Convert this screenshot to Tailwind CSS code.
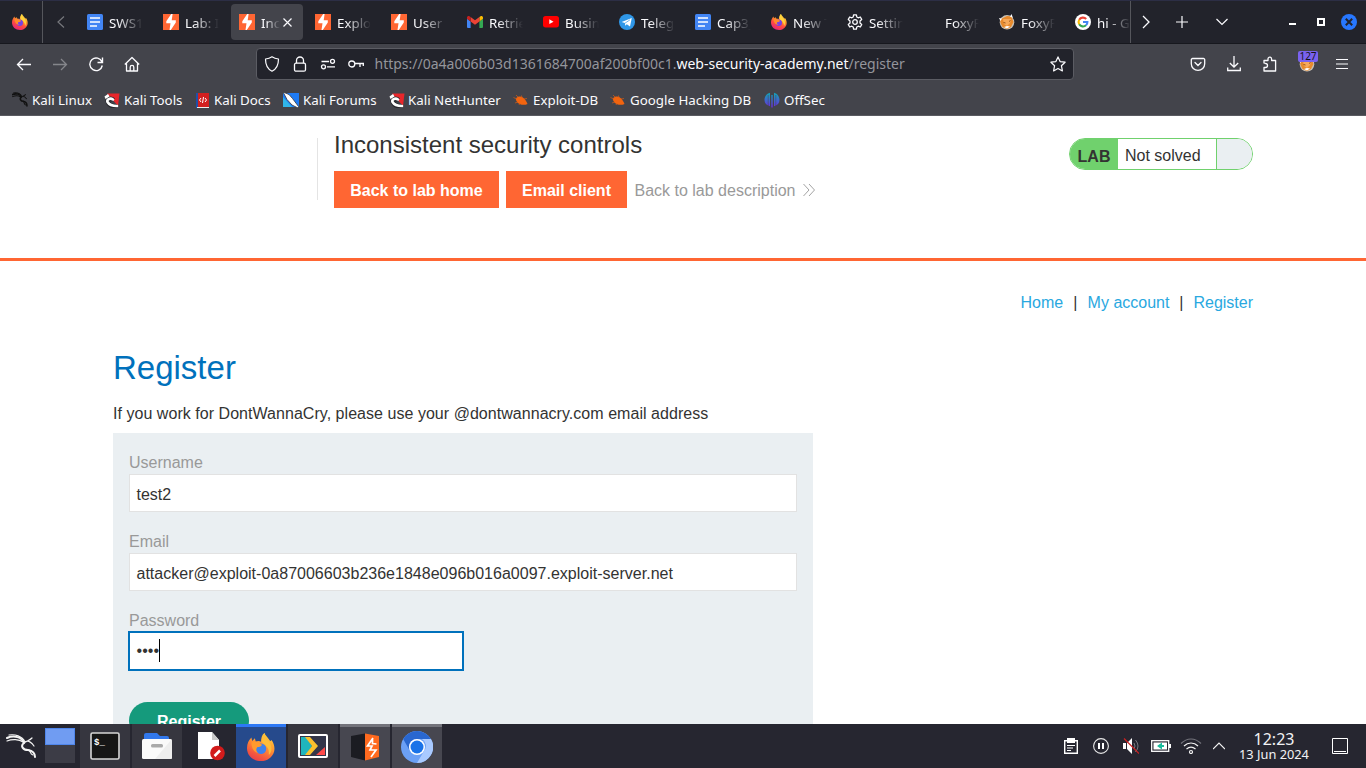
<!DOCTYPE html>
<html lang="en">
<head>
<meta charset="utf-8">
<title>Inconsistent security controls</title>
<script src="https://cdn.jsdelivr.net/npm/@tailwindcss/browser@4"></script>
</head>
<body class="w-[1366px] h-[768px] overflow-hidden bg-white">
<svg class="absolute w-0 h-0">
  <defs>
    <linearGradient id="fxg" x1="0.8" y1="0" x2="0.3" y2="1"><stop offset="0" stop-color="#fff44f"/><stop offset=".35" stop-color="#ff9a2b"/><stop offset=".65" stop-color="#ff4b3f"/><stop offset="1" stop-color="#e5227d"/></linearGradient>
    <linearGradient id="fxo" x1="0.8" y1="0" x2="0.3" y2="1"><stop offset="0" stop-color="#ffd83b"/><stop offset=".45" stop-color="#ff9332"/><stop offset=".8" stop-color="#f4573f"/><stop offset="1" stop-color="#e8404a"/></linearGradient>
    <linearGradient id="ofs" x1="0" y1="0" x2="0" y2="1"><stop offset="0" stop-color="#12a5b5"/><stop offset="1" stop-color="#6a2be0"/></linearGradient>
    <symbol id="firefox" viewBox="0 0 32 32">
      <path fill="url(#fxg)" d="M20 0c1 3 3 4 5 7 1 1 1 2 2 2l1-1c3 4 4 9 3 13-2 7-8 11-15 11C7 32 0 26 0 17 0 12 2 8 5 5l1 4 3-3 1 4c2-1 4-1 6 0 0-4 1-8 4-10z"/>
      <circle cx="15.500" cy="17.500" r="6.500" fill="#7542e5"/>
      <path fill="#ff8a2b" d="M5 10c3-3 7-1 8 1l5 2c0 2-3 3-5 3-2 2-1 5 2 5-5 2-10-4-10-11z"/>
      <path fill="#ffd43c" d="M20 0c0 7 8 9 8 18 0 2-1 4-2 6 0-4-1-7-4-10-2-3-5-2-5-6 0-3 1-6 3-8z"/>
    </symbol>
    <symbol id="fxbig" viewBox="0 0 32 32">
      <path fill="url(#fxo)" d="M20 0c1 3 3 4 5 7 1 1 1 2 2 2l1-1c3 4 4 9 3 13-2 7-8 11-15 11C7 32 0 26 0 17 0 12 2 8 5 5l1 4 3-3 1 4c2-1 4-1 6 0 0-4 1-8 4-10z"/>
      <circle cx="16" cy="18" r="6" fill="#3f82ea"/>
      <path fill="#ff9a2e" d="M5 11c3-2 7-1 8 0l4 2c0 2-3 3-5 3-2 2-2 5 1 7-5-1-8-6-8-12z"/>
      <path fill="#fdbd3a" d="M20 0c0 7 8 9 8 18 0 3-1 5-3 7 0-5 0-7-3-10-2-3-5-3-5-7 0-2 1-6 3-8z"/>
    </symbol>
    <symbol id="docs" viewBox="0 0 16 16"><rect width="16" height="16" rx="1.500" fill="#4285f4"/><path stroke="#fff" stroke-width="1.700" d="M3 4h10M3 8h10M3 12h7"/></symbol>
    <symbol id="burp" viewBox="0 0 16 16"><rect width="16" height="16" fill="#ff6633"/><path fill="#fff" d="M8.200 0 3.300 7.200v2h4.200L6.500 16h1.300l5-7.500V6.300H8.700L9.600 0z"/></symbol>
    <symbol id="gmail" viewBox="0 0 16 12"><path fill="#4285f4" d="M1 12h2.600V5.500L0 2.800V11q0 1 1 1z"/><path fill="#34a853" d="M12.400 12H15q1 0 1-1V2.800l-3.600 2.700z"/><path fill="#fbbc04" d="M12.400 1v4.500L16 2.800V1.600C16 .2 14.400-.4 13.300.4z"/><path fill="#ea4335" d="M3.600 5.500V1L8 4.300 12.400 1v4.500L8 8.800z"/><path fill="#c5221f" d="M0 1.600v1.200l3.600 2.700V1L2.700.4C1.600-.4 0 .2 0 1.600z"/></symbol>
    <symbol id="yt" viewBox="0 0 16 12"><rect width="16" height="11.400" rx="2.600" fill="#f00"/><path fill="#fff" d="M6.300 3.300v4.800l4.200-2.400z"/></symbol>
    <symbol id="tg" viewBox="0 0 16 16"><circle cx="8" cy="8" r="8" fill="#2f97e8"/><path fill="#fff" d="M2.600 8 12.800 4 11 12.500 7.800 10.300l-1.600 1.500-.3-2.700z"/><path stroke="#2f97e8" stroke-width=".7" d="M6 9.200 11 5.800"/></symbol>
    <symbol id="gear" viewBox="0 0 16 16"><g fill="none" stroke="#fbfbfe" stroke-width="1.300" stroke-linejoin="round"><path d="M6.600.8h2.800l.4 2.200 1.400.8 2.100-.8 1.400 2.400L13 6.900v2.200l1.700 1.500-1.400 2.400-2.100-.8-1.400.8-.4 2.200H6.600l-.4-2.200-1.400-.8-2.100.8-1.400-2.400L3 9.100V6.900L1.300 5.400 2.700 3l2.100.8L6.200 3z"/><circle cx="8" cy="8" r="2.300"/></g></symbol>
    <symbol id="foxy" viewBox="0 0 16 16"><circle cx="8" cy="8.300" r="7.300" fill="#c9c0b4"/><path fill="#e88a2c" d="M1 5.500 4 4l4-2 4.500.5L14.500 8l-2.500 5-4 2-4.500-2L1.500 9z"/><path fill="#f7a95a" d="M4 5h8l-1 4-3 3-3-2z"/><path fill="#fff" d="M0 4l3 .5L1.500 7zM12.500 0l1.500 4L11 2.500zM5 13l3-1 3 .5-3 2z"/><path stroke="#8a4a12" stroke-width=".9" d="M4.500 8.500l2 .5M10 7.500l1.500-1"/></symbol>
    <symbol id="google" viewBox="0 0 16 16"><circle cx="8" cy="8" r="8" fill="#fff"/><g fill="none" stroke-width="2.100"><path stroke="#ea4335" d="M4.200 5.800A4.400 4.400 0 0 1 11.200 5"/><path stroke="#fbbc05" d="M4.200 5.800a4.400 4.400 0 0 0 0 4.400"/><path stroke="#34a853" d="M4.200 10.200a4.400 4.400 0 0 0 6.800 1.100"/><path stroke="#4285f4" d="M8 8h4.400a4.400 4.400 0 0 1-1.400 3.300"/></g></symbol>
    <symbol id="dragon" viewBox="0 0 31 31"><g fill="none" stroke="currentColor" stroke-linecap="round"><path stroke-width="3" d="M1 5c7-3 15-1 17 5-4 3-1 8 4 8 5 1 7 4 7 9"/><path stroke-width="2" d="M1 9c5-2 12-2 16 1M3 2c6-1 13 1 16 7 3-2 6 0 9 4M18 10c3-2 6-3 8-5M22 18c2 2 1 5 4 7"/></g></symbol>
    <symbol id="tools" viewBox="0 0 16 16"><path fill="#e8262b" d="M3 1.500h12.500L14 14z"/><path fill="none" stroke="#26272c" stroke-width="4.600" d="M13 14.500C9 14.500 5 13 4 10 3 7.500 6.500 5.500 9.500 8"/><path fill="none" stroke="#fff" stroke-width="2.600" stroke-linecap="round" d="M13 14C9 14 5 12.500 3.500 10 2.500 7.500 6 5.500 9 7.500"/><path fill="#fff" d="M.5 4.500 4 2l1.500 2.500L1.500 7z"/></symbol>
    <symbol id="forums" viewBox="0 0 16 16"><path fill="#1e7bf5" d="M0 1h16v14H0z"/><path fill="#30b6ea" d="M0 5v10h9z"/><path stroke="#35363c" stroke-width=".8" fill="#fff" d="M0 0l6 2.500 3.500 4 6 8-.5 1.500-6-3-5-5.500z"/></symbol>
    <symbol id="bug" viewBox="0 0 16 16"><path fill="#f2640f" d="M3 6.500C5 4 8 4 10.500 6c2 1.500 3 3.500 4 6-3 1.500-8 1-10-1.500C3.500 9 2.500 8 3 6.500z"/><path stroke="#d85c14" stroke-width=".7" fill="none" d="M4 7 .5 5.500M5 5 3 3M9 6 8.500 3.500M11 7l3-.5M5 10l-3 1m5 0-1 2"/></symbol>
    <symbol id="shield" viewBox="0 0 16 16"><path fill="none" stroke="#fbfbfe" stroke-width="1.200" stroke-linejoin="round" d="M8 .8C6 2.200 3.800 2.800 1.500 3c0 5.600 1 9.600 6.500 12.200C13.500 12.600 14.500 8.600 14.500 3 12.200 2.800 10 2.200 8 .8z"/></symbol>
  </defs>
</svg>
<div class="flex flex-col w-full h-full">

  <!-- Tab strip -->
  <header class="h-[44px] shrink-0 flex bg-[#22232b] border-t border-[#2c2e45] border-b border-b-[#17181e] font-['Noto_Sans',sans-serif] text-[13.330px] text-[#fbfbfe]">
    <div class="w-[43px] border-r border-[#55565c] flex items-center justify-center"><svg class="w-4 h-4 ml-[-2px]"><use href="#firefox"/></svg></div>
    <div class="w-[36px] flex items-center justify-center"><svg class="w-2 h-3" viewBox="0 0 8 12" fill="none" stroke="#77787d" stroke-width="1.200"><path d="M7 .5 1 6l6 5.500"/></svg></div>
    <div id="tabs" class="w-[1052px] overflow-hidden flex items-center border-r border-[#55565c]"></div>
    <div class="flex-1 flex items-center">
      <svg class="w-[10px] h-[14px] ml-[10px]" viewBox="0 0 10 14" fill="none" stroke="#fbfbfe" stroke-width="1.300"><path d="M2 1l6 6-6 6"/></svg>
      <svg class="w-3 h-3 ml-[25px]" viewBox="0 0 12 12" stroke="#fbfbfe" stroke-width="1.200"><path d="M6 0v12M0 6h12"/></svg>
      <svg class="w-3 h-2 ml-[28px]" viewBox="0 0 12 8" fill="none" stroke="#fbfbfe" stroke-width="1.200"><path d="M.5 1 6 6.500 11.500 1"/></svg>
      <div class="w-[7px] h-[2px] bg-white ml-[61px] mt-[4px]"></div>
      <div class="w-2 h-2 border-2 border-white ml-[21px]"></div>
      <svg class="w-4 h-4 ml-[16px]" viewBox="0 0 16 16"><circle cx="8" cy="8" r="8" fill="#2777ff"/><path stroke="#22232b" stroke-width="2" d="M4.800 4.800l6.400 6.400M11.200 4.800l-6.400 6.400"/></svg>
    </div>
  </header>

  <!-- Navigation bar -->
  <div class="h-[40px] shrink-0 bg-[#43444b] flex items-center font-['Noto_Sans',sans-serif]">
    <div class="w-[256px] pl-4 flex gap-[20px] items-center">
      <svg class="w-4 h-4" viewBox="0 0 16 16" fill="none" stroke="#fbfbfe" stroke-width="1.300"><path d="M15 8.500H1.500M7 3 1.500 8.500 7 14"/></svg>
      <svg class="w-4 h-4" viewBox="0 0 16 16" fill="none" stroke="#85868b" stroke-width="1.300"><path d="M1 8.500h13.500M9 3 14.500 8.500 9 14"/></svg>
      <svg class="w-4 h-4" viewBox="0 0 16 16" fill="none" stroke="#fbfbfe" stroke-width="1.400"><path d="M14.500 1.500v5h-5M14 6A6.300 6.300 0 1 0 14.300 9.500"/></svg>
      <svg class="w-4 h-4" viewBox="0 0 16 16" fill="none" stroke="#fbfbfe" stroke-width="1.300" stroke-linejoin="round"><path d="M.8 8.500 8 1.500l7.200 7M2.500 7.500V15h11V7.500M6.200 15v-3.800a1.800 1.800 0 0 1 3.600 0V15"/></svg>
    </div>
    <div class="w-[818px] h-8 bg-[#22232b] border border-[#5b5c63] rounded-[4px] flex items-center pl-[7px] pr-[7px]">
      <svg class="w-4 h-4"><use href="#shield"/></svg>
      <svg class="w-4 h-4 ml-[12px]" viewBox="0 0 16 16" fill="none" stroke="#fbfbfe" stroke-width="1.300"><rect x="2.500" y="7.200" width="11" height="8" rx="1.500"/><path d="M4.500 7.200V4.500a3.500 3.500 0 0 1 7 0v2.700"/></svg>
      <svg class="w-4 h-4 ml-[12px]" viewBox="0 0 16 16" fill="none" stroke="#fbfbfe" stroke-width="1.300"><path d="M1.500 5.500H9M7 10.800h8"/><circle cx="12.500" cy="5.300" r="2"/><circle cx="3.500" cy="10.800" r="2"/></svg>
      <svg class="w-4 h-4 ml-[12px]" viewBox="0 0 16 16" fill="none" stroke="#fbfbfe" stroke-width="1.300"><circle cx="3.800" cy="8" r="3"/><path d="M6.800 7.500H16M12 7.500V11M15.300 7.500V10"/></svg>
      <div class="ml-[10.500px] text-[14px] text-[#94959b] whitespace-nowrap flex-1 -mt-px">https://0a4a006b03d1361684700af200bf00c1.<span class="text-[#fbfbfe]">web-security-academy.net</span>/register</div>
      <svg class="w-4 h-4" viewBox="0 0 16 16" fill="none" stroke="#fbfbfe" stroke-width="1.200" stroke-linejoin="round"><path d="M8 .9l2.100 4.700 5 .6-3.700 3.500 1 5.200L8 12.400l-4.400 2.500 1-5.200L.9 6.200l5-.6z"/></svg>
    </div>
    <div class="flex-1 flex items-center justify-end pr-4">
      <svg class="w-4 h-4 mr-[20px]" viewBox="0 0 16 16" fill="none" stroke="#fbfbfe" stroke-width="1.300" stroke-linecap="round"><path d="M2.500 2.500h11a1.200 1.200 0 0 1 1.200 1.200v4a6.700 6.700 0 0 1-13.400 0v-4a1.200 1.200 0 0 1 1.200-1.200zM5 6.500l3 3 3-3"/></svg>
      <svg class="w-4 h-4 mr-[20px]" viewBox="0 0 16 16" fill="none" stroke="#fbfbfe" stroke-width="1.300"><path d="M8 0v11M3.800 7 8 11l4.200-4M1.700 11.500v3h12.600v-3"/></svg>
      <svg class="w-4 h-4 mr-[21px]" viewBox="0 0 16 16" fill="none" stroke="#fbfbfe" stroke-width="1.300" stroke-linejoin="round"><path d="M2 7V4.500h4V3a1.800 1.800 0 0 1 3.600 0v1.500h4V15H2v-3.500h1.500a2 2 0 0 0 0-4z"/></svg>
      <div class="w-4 h-4 relative mr-[19px]"><svg class="w-4 h-4"><use href="#foxy"/></svg><div class="absolute left-[-1px] top-[-5px] w-[20px] h-[11px] rounded-[2px] bg-[#7a62f0] text-[#15141a] text-[10px] leading-[11px] text-center">127</div></div>
      <svg class="w-4 h-4" viewBox="0 0 16 16" stroke="#fbfbfe" stroke-width="1.200"><path d="M2 3.500h12M2 8h12M2 12.500h12"/></svg>
    </div>
  </div>

  <!-- Bookmarks -->
  <div class="h-[32px] shrink-0 bg-[#43444b] border-b border-[#5a5b61] flex items-center pl-3 pt-[2px] font-['Noto_Sans',sans-serif] text-[13.330px] text-[#fbfbfe] whitespace-nowrap">
    <div class="w-[92px] flex items-center gap-1"><svg class="w-4 h-4 text-[#111]"><use href="#dragon"/></svg>Kali Linux</div>
    <div class="w-[92px] flex items-center gap-1"><svg class="w-4 h-4"><use href="#tools"/></svg>Kali Tools</div>
    <div class="w-[87px] flex items-center gap-[5px]"><svg class="w-[13px] h-[15px]" viewBox="0 0 13 15"><path fill="#d31f1f" d="M0 0h13v15H0z"/><path fill="#1f4fa8" d="M0 0h2v15H0z"/><path fill="#eee" d="M1 14h12v1H1z"/><path fill="none" stroke="#fff" d="M5 5 3.500 7 5 9m4-4 1.500 2L9 9M7.500 4l-1 6"/></svg>Kali Docs</div>
    <div class="w-[106px] flex items-center gap-1"><svg class="w-4 h-4"><use href="#forums"/></svg>Kali Forums</div>
    <div class="w-[124px] flex items-center gap-[3px]"><svg class="w-4 h-4"><use href="#tools"/></svg>Kali NetHunter</div>
    <div class="w-[97px] flex items-center gap-1"><svg class="w-4 h-4"><use href="#bug"/></svg>Exploit-DB</div>
    <div class="w-[154px] flex items-center gap-1"><svg class="w-4 h-4"><use href="#bug"/></svg>Google Hacking DB</div>
    <div class="flex items-center gap-1"><svg class="w-4 h-4" viewBox="0 0 16 16"><path fill="url(#ofs)" d="M6 .8v13.400C2.500 13.500.5 11 .5 8S2.500 1.500 6 .8zM10 .8v13.400c3.500-.7 5.500-3.200 5.500-6.200S13.500 1.500 10 .8zM7.300 3h1.400v12.500H7.300z"/><path stroke="#43444b" stroke-width=".5" d="M4.200 3v11M11.800 3v11"/></svg>OffSec</div>
  </div>

  <!-- Page -->
  <main class="h-[608px] shrink-0 overflow-hidden bg-white font-['Liberation_Sans',sans-serif] text-[16px] leading-5 text-[#333332]">
    <section class="h-[145px] border-b-[3px] border-[#ff6633] pt-[22px] px-[113px] flex">
      <div class="w-[205px] h-[62px] border-r border-[#e4e4e4] shrink-0"></div>
      <div class="pl-4 flex-1">
        <h2 class="text-[24px] leading-7 mt-[-7px]">Inconsistent security controls</h2>
        <div class="flex items-center mt-[12px] h-[37px]">
          <a class="w-[165px] h-[37px] bg-[#ff6633] text-white font-bold flex items-center justify-center pt-[2px]">Back to lab home</a>
          <a class="w-[121px] h-[37px] bg-[#ff6633] text-white font-bold flex items-center justify-center pt-[2px] ml-[7px]">Email client</a>
          <a class="text-[#999] ml-[7.500px] pt-[2px]">Back to lab description</a>
          <svg class="w-3 h-[14px] ml-2" viewBox="0 0 12 14" fill="none" stroke="#999" stroke-width=".9"><path d="M.5 1 6 7 .5 13M6 1l5.500 6L6 13"/></svg>
        </div>
      </div>
      <div class="w-[184px] h-8 rounded-full border border-[#70d16d] bg-white overflow-hidden flex">
        <div class="w-[48px] bg-[#70d16d] font-bold flex items-center justify-center pt-[5px]">LAB</div>
        <div class="flex-1 flex items-center pl-[7px] pt-[3px]">Not solved</div>
        <div class="w-[36px] border-l border-[#70d16d] bg-[#eaeff2]"></div>
      </div>
    </section>
    <section class="px-[113px]">
      <nav class="flex justify-end pt-[32px] text-[#29a8df]"><a>Home</a><span class="w-[24.500px] text-center text-[#333332]">|</span><a>My account</a><span class="w-[24px] text-center text-[#333332]">|</span><a>Register</a></nav>
      <h1 class="text-[33px] leading-10 text-[#0071bc] mt-[35px]">Register</h1>
      <p class="mt-[16px] tracking-[0.040px]">If you work for DontWannaCry, please use your @dontwannacry.com email address</p>
      <div class="mt-[9px] w-[700px] h-[340px] bg-[#eaeff2] px-4 pt-[20px]">
        <label class="block text-[#999]">Username</label>
        <div class="h-[38px] mt-[1px] bg-white border border-[#e2e2e2] pl-[6.500px] pt-[4px] flex items-center">test2</div>
        <label class="block text-[#999] mt-[20px]">Email</label>
        <div class="h-[38px] mt-[1px] bg-white border border-[#e2e2e2] pl-[6.500px] pt-[4px] flex items-center tracking-[0.010px]">attacker@exploit-0a87006603b236e1848e096b016a0097.exploit-server.net</div>
        <label class="block text-[#999] mt-[20px]">Password</label>
        <div class="h-[40px] w-[336px] -ml-px bg-white border-2 border-[#0071bc] pl-[6.600px] flex items-center"><span>••••</span><span class="w-px h-[23px] bg-black -mt-px"></span></div>
        <div class="mt-[31px] w-[120px] h-[37px] rounded-full bg-[#159a7c] text-white font-bold text-center pt-[10px]">Register</div>
      </div>
    </section>
  </main>

  <!-- Desktop panel -->
  <footer class="h-[44px] shrink-0 bg-[#262630] flex font-['Noto_Sans',sans-serif] text-[#f2f2f4]">
    <div class="w-[45px] flex items-center pl-[6px]"><svg class="w-[31px] h-[26px]" viewBox="0 0 31 26" fill="none" stroke="#f4f4f4" stroke-linecap="round"><path stroke-width="2" d="M1 5c7-3 15-1 17 5-4 3-1 7 4 7 5 1 7 4 7 7"/><path stroke-width="1.200" d="M1 8c5-2 12-2 16 1M3 2c6-1 13 1 16 7 3-2 6 0 9 4M18 10c3-2 6-3 8-5M23 17c2 2 1 4 4 5"/></svg></div>
    <div class="w-[35px] pt-[4px]"><div class="w-[30px] h-[17px] bg-[#709cf2] border border-[#4f86ec]"></div><div class="w-[30px] h-[18px] bg-[#3c3c46]"></div></div>
    <div class="flex gap-[2px]">
      <div class="w-[50px] bg-[#36363f] flex items-center justify-center"><svg class="w-[30px] h-[28px]" viewBox="0 0 30 28"><rect x="1" y="1" width="28" height="26" rx="1.500" fill="#161616" stroke="#d6d6d6" stroke-width="1.600"/><text x="4" y="13" font-family="Liberation Mono" font-weight="bold" font-size="9" fill="#fff">$_</text></svg></div>
      <div class="w-[50px] bg-[#36363f] flex items-center justify-center"><svg class="w-[30px] h-[28px]" viewBox="0 0 30 28"><path fill="#3278ec" d="M2 3q0-2 2-2h11l3 3h7q2 0 2 2v6H2z"/><rect y="7" width="30" height="20" rx="1.500" fill="#fafafa"/><path fill="#e6e6e6" d="M30 7v20H13z" opacity=".6"/><rect x="9" y="12" width="12" height="3.500" rx="1.500" fill="#a9a9a9"/></svg></div>
      <div class="w-[50px] flex items-center justify-center pl-[4px]"><svg class="w-[28px] h-[30px]" viewBox="0 0 28 30"><path fill="#fff" d="M1 1h14l7 8v19H1z"/><path fill="#c9c9c9" d="M15 1l7 8h-7z"/><circle cx="20.500" cy="22" r="7.300" fill="#d21b1b"/><path stroke="#fff" stroke-width="2.500" d="M17.500 25l5.500-5.500"/></svg></div>
      <div class="w-[50px] bg-[#264a8c] border-t-[3px] border-[#2d78f4] flex items-center justify-center"><svg class="w-7 h-7 mt-[-2px]"><use href="#fxbig"/></svg></div>
      <div class="w-[50px] bg-[#36363f] flex items-center justify-center"><svg class="w-[30px] h-[24px]" viewBox="0 0 30 24"><rect x="1" y="1" width="28" height="22" fill="#33364a" stroke="#fff" stroke-width="2" rx="1"/><path fill="#1fb5bd" d="M3 3h5l6 9-6 9H3z"/><path fill="#fbc02d" d="M7 3h5l8 9-8 9H7l7-9z"/><path fill="#ff4a4a" d="M27 13v8H18z"/></svg></div>
      <div class="w-[50px] bg-[#474750] border-t-[3px] border-[#73737b] flex items-center justify-center"><svg class="w-7 h-7 mt-[-2px]" viewBox="0 0 28 28"><path fill="#1b1c22" d="M0 3l14-2.500v27L0 24z"/><path fill="#ff6a1f" d="M14 .5 28 3v21l-14 3.500z"/><path fill="none" stroke="#fff" stroke-width="1.700" d="M22 5l-5.500 8h4.500l-2 4h6l-5 7M21.500 5.500v5l4 .5"/></svg></div>
      <div class="w-[50px] bg-[#474750] border-t-[3px] border-[#73737b] flex items-center justify-center"><svg class="w-8 h-8 mt-[-2px]" viewBox="0 0 32 32"><circle cx="16" cy="16" r="16" fill="#6ba0f5"/><path fill="#2967cf" d="M2.200 8A16 16 0 0 1 29.800 8H16a8 8 0 0 0-7 12z"/><path fill="#a9caff" d="M30 8a16 16 0 0 1-14 24l7-12a8 8 0 0 0-2-12z"/><circle cx="16" cy="16" r="8" fill="#fff"/><circle cx="16" cy="16" r="6.500" fill="#1a73e8"/></svg></div>
    </div>
    <div class="flex-1 flex items-center justify-end">
      <svg class="w-[14px] h-4 mr-[15px]" viewBox="0 0 14 16"><path fill="none" stroke="#fff" stroke-width="1.400" d="M.7 2.700h12.600v12.600H.7z"/><path fill="#fff" d="M3 0h8v5H3z"/><path stroke="#fff" d="M3 7.500h8M3 10h6M3 12.500h4"/></svg>
      <svg class="w-4 h-4 mr-[14px]" viewBox="0 0 16 16"><circle cx="8" cy="8" r="7.400" fill="none" stroke="#e8e8e8" stroke-width="1.100"/><path stroke="#fff" stroke-width="2" d="M6 5v6M10 5v6"/></svg>
      <svg class="w-4 h-4 mr-[12px]" viewBox="0 0 16 16"><path fill="#fff" d="M0 5h3v6H0zM4 5l5-5v16l-5-5z"/><path fill="none" stroke="#77777e" d="M11 5q2 3 0 6M12.500 2q5 6 0 12"/><path stroke="#c22" stroke-width="1.200" d="M1 .5 16 15.500"/></svg>
      <svg class="w-5 h-3 mr-[9px]" viewBox="0 0 20 12"><rect x=".7" y=".7" width="17" height="10.600" fill="none" stroke="#fff" stroke-width="1.300"/><path fill="#fff" d="M18 4h2v4h-2zM2.500 2.500h13.500v7H2.500z"/><path fill="#1abc9c" d="M6 6l5-3.500v2.500h2v2h-2v2.500z"/></svg>
      <svg class="w-[22px] h-4 mr-[11px]" viewBox="0 0 22 16" fill="none" stroke="#f4f4f4" stroke-width="1.200"><path stroke="#74747c" d="M1 5.500C7-.5 15-.5 21 5.500"/><path d="M4 8c4-4 10-4 14 0M6.500 11c3-2.500 6-2.500 9 0"/><circle cx="11" cy="14" r="1.500"/></svg>
      <svg class="w-3 h-2 mr-[13px]" viewBox="0 0 12 8" fill="none" stroke="#f4f4f4" stroke-width="1.200"><path d="M0 7l6-6 6 6"/></svg>
      <div class="w-[72px] text-center whitespace-nowrap"><div class="text-[16px] leading-[16px] pb-px">12:23</div><div class="text-[12.800px] leading-[13px]">13 Jun 2024</div></div>
      <svg class="w-4 h-4 ml-[22px] mr-[18px]" viewBox="0 0 16 16" fill="none" stroke="#fff"><path d="M.5.500h15v15H.5zM2 13.500h12"/></svg>
    </div>
  </footer>
</div>
<script>
const tabs=[['docs','SWS1'],['burp','Lab: I'],['burp','Inc',1],['burp','Explo'],['burp','User'],['gmail','Retrie'],['yt','Busin'],['tg','Teleg'],['docs','Cap3_'],['firefox','New T'],['gear','Settin'],['','FoxyP'],['foxy','FoxyP'],['google','hi - G']];
document.getElementById('tabs').innerHTML=tabs.map(([i,t,a])=>`<div class="w-[76px] shrink-0 flex items-center"><div class="w-[72px] h-[36px] rounded-[4px] pl-2 flex items-center ${a?'bg-[#43444b]':''}"><svg class="w-4 h-4 shrink-0">${i?`<use href="#${i}"/>`:''}</svg><span class="${a?'w-[19px]':'w-[34px]'} ml-[6px] mt-[3px] shrink-0 overflow-hidden whitespace-nowrap [mask-image:linear-gradient(to_right,#000_25%,transparent)]">${t}</span>${a?'<svg class="w-[9px] h-[9px] ml-[3px] shrink-0" viewBox="0 0 9 9" stroke="#fbfbfe" stroke-width="1.200"><path d="M.5.5l8 8M8.500.5l-8 8"/></svg>':''}</div></div>`).join('');
</script>
</body>
</html>
